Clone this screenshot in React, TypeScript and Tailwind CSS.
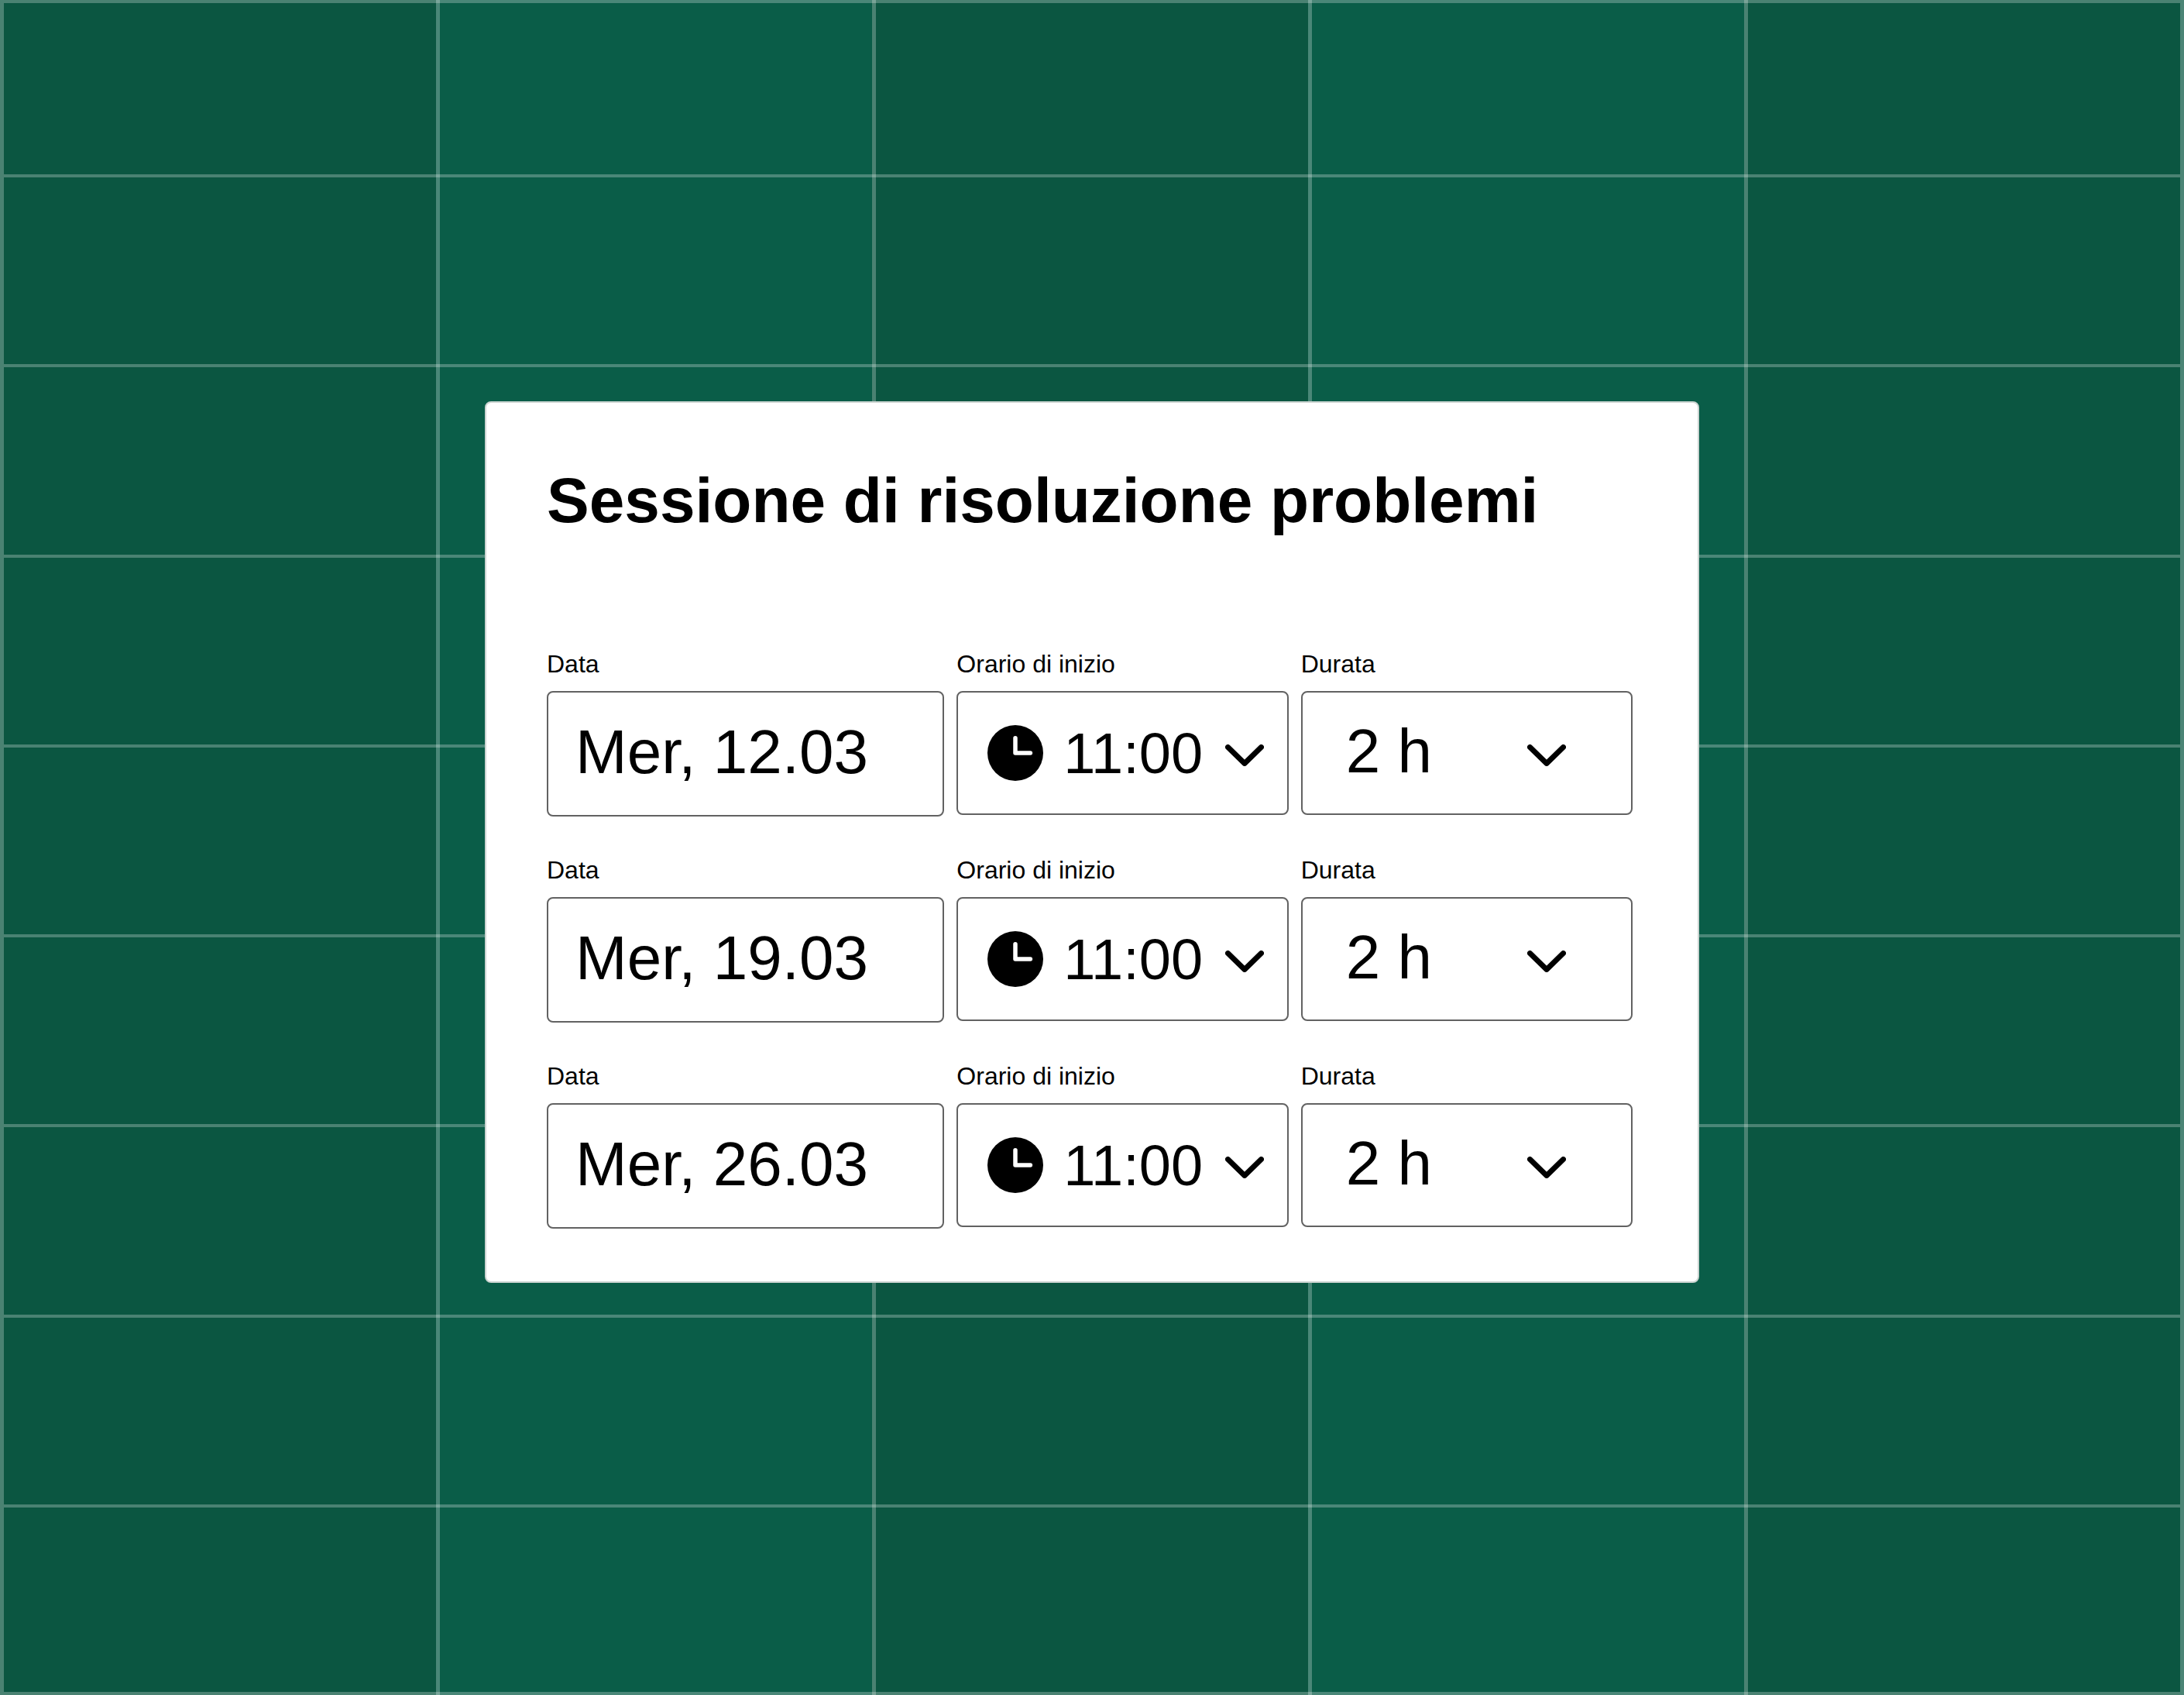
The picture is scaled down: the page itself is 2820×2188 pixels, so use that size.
import React from 'react';

interface Session {
  id: string;
  date: string;
  time: string;
  duration: string;
}

const sessions: Session[] = [
  { id: 's1', date: 'Mer, 12.03', time: '11:00', duration: '2 h' },
  { id: 's2', date: 'Mer, 19.03', time: '11:00', duration: '2 h' },
  { id: 's3', date: 'Mer, 26.03', time: '11:00', duration: '2 h' },
];

const columns = [0, 1, 2, 3, 4];
const rows = [0, 1, 2, 3, 4, 5, 6, 7, 8];

const labelClass = 'mb-[15px] text-[32px] leading-[40px]';
const fieldClass =
  'block w-full appearance-none rounded-lg border-2 border-[#626262] bg-white text-black outline-none focus:border-black';

const ClockIcon: React.FC<{ className?: string }> = ({ className }) => (
  <svg viewBox="0 0 72 72" fill="none" className={className} aria-hidden="true">
    <circle cx="36" cy="36" r="36" fill="#000" />
    <path d="M36 16.8V36H55.4" stroke="#fff" strokeWidth="5.5" strokeLinecap="round" strokeLinejoin="round" />
  </svg>
);

const ChevronIcon: React.FC<{ className?: string }> = ({ className }) => (
  <svg viewBox="0 0 50 28" fill="none" className={className} aria-hidden="true">
    <path d="M3.5 3.5L25 24.5L46.5 3.5" stroke="#000" strokeWidth="7" strokeLinecap="round" strokeLinejoin="round" />
  </svg>
);

const CalendarBackdrop: React.FC = () => (
  <>
    <div className="col-start-1 row-start-1 flex border-r-[5px] border-[#4b8475]">
      {columns.map((c) => (
        <div
          key={c}
          className={`flex-1 border-l-[5px] border-white/26 ${c % 2 === 0 ? 'bg-[#0b5641]' : 'bg-[#0a5d48]'}`}
        />
      ))}
    </div>
    <div className="col-start-1 row-start-1 mx-[5px] grid grid-rows-[225fr_repeat(7,245fr)_246fr]">
      {rows.map((r) => (
        <div key={r} className="border-t-4 border-white/26 last:border-b-4" />
      ))}
    </div>
  </>
);

const SessionRow: React.FC<{ session: Session }> = ({ session }) => (
  <div className="grid grid-cols-[513fr_428fr_428fr] items-start gap-x-4">
    <div className="flex flex-col">
      <label htmlFor={`${session.id}-date`} className={labelClass}>
        Data
      </label>
      <input
        id={`${session.id}-date`}
        type="text"
        defaultValue={session.date}
        className={`${fieldClass} h-[162px] pb-1 pl-[35px] text-[80px]`}
      />
    </div>

    <div className="flex flex-col">
      <label htmlFor={`${session.id}-time`} className={labelClass}>
        Orario di inizio
      </label>
      <div className="relative">
        <select
          id={`${session.id}-time`}
          defaultValue={session.time}
          className={`${fieldClass} h-[160px] pl-[136px] text-[74px]`}
        >
          <option>10:00</option>
          <option>11:00</option>
          <option>12:00</option>
        </select>
        <ClockIcon className="pointer-events-none absolute top-[44px] left-10 size-[72px]" />
        <ChevronIcon className="pointer-events-none absolute top-[69px] right-8 h-7 w-[50px]" />
      </div>
    </div>

    <div className="flex flex-col">
      <label htmlFor={`${session.id}-duration`} className={labelClass}>
        Durata
      </label>
      <div className="relative">
        <select
          id={`${session.id}-duration`}
          defaultValue={session.duration}
          className={`${fieldClass} h-[160px] pb-1 pl-14 text-[80px]`}
        >
          <option>1 h</option>
          <option>2 h</option>
          <option>3 h</option>
        </select>
        <ChevronIcon className="pointer-events-none absolute top-[69px] right-[86px] h-7 w-[50px]" />
      </div>
    </div>
  </div>
);

export default function App() {
  return (
    <main className="grid min-h-screen bg-[#0b5641] font-['Liberation_Sans',Arial,sans-serif] text-black">
      <CalendarBackdrop />
      <div className="z-10 col-start-1 row-start-1 flex items-center justify-center pb-[14px]">
        <form className="w-full max-w-[1568px] rounded-lg border-2 border-[#cdd5d2] bg-white pt-[76px] pr-[84px] pb-[68px] pl-[78px]">
          <h1 className="text-[82px] leading-[100px] font-bold">Sessione di risoluzione problemi</h1>
          <div className="mt-[141px] flex flex-col gap-[49px]">
            {sessions.map((s) => (
              <SessionRow key={s.id} session={s} />
            ))}
          </div>
        </form>
      </div>
    </main>
  );
}
